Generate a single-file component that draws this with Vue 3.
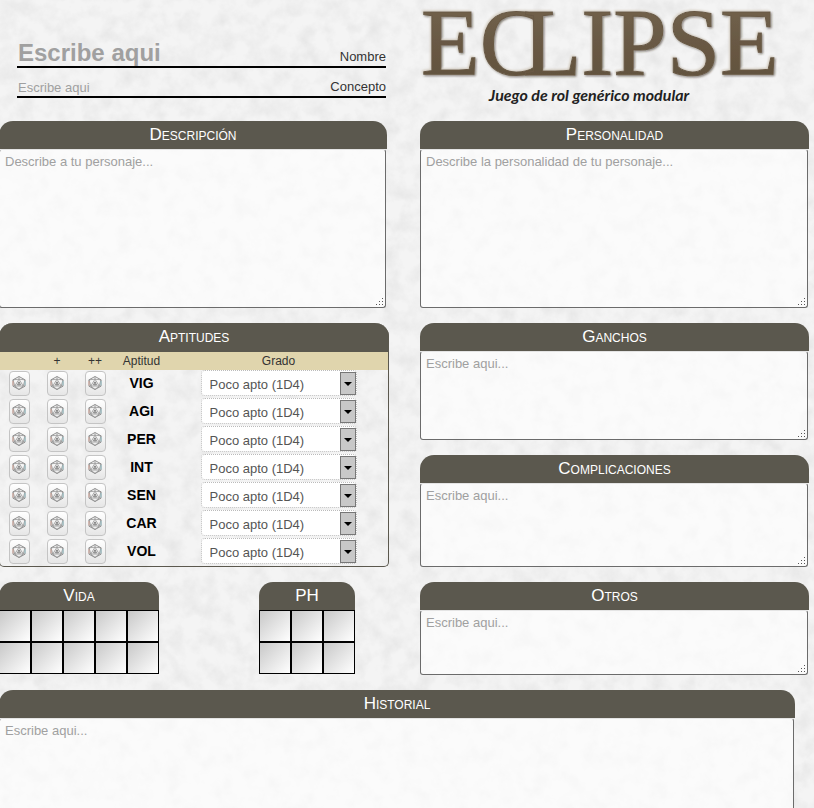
<script setup>
import { reactive } from 'vue'

const sheet = reactive({
  nombre: '', concepto: '', descripcion: '', personalidad: '',
  ganchos: '', complicaciones: '', otros: '', historial: ''
})
const grados = ['Poco apto (1D4)', 'Apto (1D6)', 'Muy apto (1D8)', 'Experto (1D10)']
const aptitudes = reactive(
  ['VIG', 'AGI', 'PER', 'INT', 'SEN', 'CAR', 'VOL'].map(name => ({ name, grado: grados[0] }))
)
const rolls = ['Tirar', 'Tirar +', 'Tirar ++']
const vida = reactive(Array(10).fill(false))
const ph = reactive(Array(6).fill(false))
const rightBoxes = [
  { key: 'personalidad', title: 'Personalidad', hint: 'Describe la personalidad de tu personaje...' },
  { key: 'ganchos', title: 'Ganchos', hint: 'Escribe aqui...' },
  { key: 'complicaciones', title: 'Complicaciones', hint: 'Escribe aqui...' },
  { key: 'otros', title: 'Otros', hint: 'Escribe aqui...' }
]
</script>

<template>
  <main class="sheet">
    <svg class="paper" aria-hidden="true">
      <filter id="grain" x="0" y="0" width="100%" height="100%">
        <feTurbulence type="fractalNoise" baseFrequency="0.06" numOctaves="6" seed="8" />
        <feColorMatrix values="0 0 0 0 0.45  0 0 0 0 0.45  0 0 0 0 0.45  0.3 0.2 0 0 -0.2" />
      </filter>
      <rect width="100%" height="100%" filter="url(#grain)" />
    </svg>

    <header class="top">
      <div class="identity">
        <div class="line">
          <input id="nombre" v-model="sheet.nombre" class="name" placeholder="Escribe aqui" />
          <label for="nombre">Nombre</label>
        </div>
        <div class="line">
          <input id="concepto" v-model="sheet.concepto" placeholder="Escribe aqui" />
          <label for="concepto">Concepto</label>
        </div>
      </div>
      <svg class="logo" viewBox="0 0 389 112" role="img" aria-label="Eclipse">
        <defs>
          <linearGradient id="bronze" x1="0" y1="0" x2="0" y2="1">
            <stop offset="0" stop-color="#75654e" />
            <stop offset="0.5" stop-color="#695944" />
            <stop offset="1" stop-color="#5f4f3b" />
          </linearGradient>
          <filter id="bevel" x="-5%" y="-10%" width="110%" height="125%">
            <feGaussianBlur in="SourceAlpha" stdDeviation="1" result="soft" />
            <feOffset in="soft" dx="1" dy="1" result="low" />
            <feFlood flood-color="#33271a" flood-opacity="0.7" />
            <feComposite in2="low" operator="in" result="shade" />
            <feOffset in="soft" dx="-1" dy="-1" result="high" />
            <feFlood flood-color="#d2cabd" />
            <feComposite in2="high" operator="in" result="light" />
            <feMerge>
              <feMergeNode in="shade" />
              <feMergeNode in="light" />
              <feMergeNode in="SourceGraphic" />
            </feMerge>
          </filter>
        </defs>
        <text class="wordmark" x="1" y="75" filter="url(#bevel)">EC<tspan dx="-21">LIPSE</tspan></text>
        <text class="motto" x="169" y="101">Juego de rol genérico modular</text>
      </svg>
    </header>

    <div class="columns">
      <div class="left">
        <section class="box descripcion">
          <h2><label for="descripcion">Descripción</label></h2>
          <div class="area">
            <textarea id="descripcion" v-model="sheet.descripcion" placeholder="Describe a tu personaje..."></textarea>
            <svg class="grip" viewBox="0 0 9 9"><path d="M0 7h1v1H0zM3 7h1v1H3zM6 7h1v1H6zM3 4h1v1H3zM6 4h1v1H6zM6 1h1v1H6z" /></svg>
          </div>
        </section>

        <section class="aptitudes">
          <h2>Aptitudes</h2>
          <table>
            <colgroup>
              <col class="c-roll" /><col class="c-roll" /><col class="c-roll" /><col class="c-name" /><col />
            </colgroup>
            <thead>
              <tr><th></th><th>+</th><th>++</th><th>Aptitud</th><th>Grado</th></tr>
            </thead>
            <tbody>
              <tr v-for="a in aptitudes" :key="a.name">
                <td v-for="r in rolls" :key="r">
                  <button type="button" class="die" :aria-label="r + ' ' + a.name">
                    <svg viewBox="0 0 14 16">
                      <path class="edge" d="M7 1.5 13 4.8V11.2L7 14.5 1 11.2V4.8Z" />
                      <path d="M7 4.2 11.2 11H2.8ZM7 1.5V4.2M1 4.8 7 4.2 13 4.8 11.2 11 13 11.2M1 4.8 2.8 11 1 11.2M2.8 11 7 14.5 11.2 11" />
                      <path class="mark" d="M5.6 9.8 7 6.8 8.4 9.8Z" />
                      <path class="warm" d="M1 6V10.4" />
                      <path class="cool" d="M13 6V10.4" />
                    </svg>
                  </button>
                </td>
                <td class="apt">{{ a.name }}</td>
                <td>
                  <span class="pick">
                    <select v-model="a.grado" :aria-label="'Grado de ' + a.name">
                      <option v-for="g in grados" :key="g">{{ g }}</option>
                    </select>
                    <span class="arrow"></span>
                  </span>
                </td>
              </tr>
            </tbody>
          </table>
        </section>

        <div class="counters">
          <section class="counter">
            <h2>Vida</h2>
            <div class="cells five">
              <button v-for="(v, i) in vida" :key="i" type="button" :class="{ on: v }" :aria-label="'Vida ' + (i + 1)" @click="vida[i] = !v"></button>
            </div>
          </section>
          <section class="counter">
            <h2>PH</h2>
            <div class="cells three">
              <button v-for="(v, i) in ph" :key="i" type="button" :class="{ on: v }" :aria-label="'PH ' + (i + 1)" @click="ph[i] = !v"></button>
            </div>
          </section>
        </div>
      </div>

      <div class="right">
        <section v-for="b in rightBoxes" :key="b.key" class="box" :class="b.key">
          <h2><label :for="b.key">{{ b.title }}</label></h2>
          <div class="area">
            <textarea :id="b.key" v-model="sheet[b.key]" :placeholder="b.hint"></textarea>
            <svg class="grip" viewBox="0 0 9 9"><path d="M0 7h1v1H0zM3 7h1v1H3zM6 7h1v1H6zM3 4h1v1H3zM6 4h1v1H6zM6 1h1v1H6z" /></svg>
          </div>
        </section>
      </div>
    </div>

    <section class="box historial">
      <h2><label for="historial">Historial</label></h2>
      <div class="area">
        <textarea id="historial" v-model="sheet.historial" placeholder="Escribe aqui..."></textarea>
      </div>
    </section>
  </main>
</template>

<style>
body {
  margin: 0;
  background: #f4f4f4;
}
</style>

<style scoped>
.sheet {
  position: relative;
  display: flex;
  flex-direction: column;
  box-sizing: border-box;
  min-height: 100vh;
  overflow: hidden;
  font-family: "Liberation Sans", Arial, sans-serif;
  font-size: 13px;
  color: #333;
}
.sheet > * {
  position: relative;
}
.sheet > .paper {
  position: absolute;
  inset: 0;
  width: 100%;
  height: 100%;
}
.top,
.columns {
  display: grid;
  grid-template-columns: 1fr 1fr;
  column-gap: 31px;
  padding-right: 5px;
}
.top {
  padding-bottom: 9px;
}
.identity {
  min-width: 0;
  padding: 38px 3px 0 17px;
}
.line {
  display: flex;
  align-items: flex-end;
  height: 28px;
  border-bottom: 2px solid #000;
}
.line input {
  flex: 1;
  min-width: 0;
  height: 18px;
  padding: 0 1px;
  border: 0;
  outline: 0;
  background: none;
  font: inherit;
}
.line input.name {
  height: 25px;
  padding-bottom: 1px;
  font-size: 24px;
  font-weight: bold;
}
.line label {
  padding-bottom: 1px;
  line-height: 16px;
}
::placeholder {
  color: #a0a0a0;
  opacity: 1;
}
.logo {
  display: block;
  width: 100%;
}
.wordmark {
  font-family: "Liberation Serif", "Times New Roman", serif;
  font-size: 96px;
  fill: url(#bronze);
  stroke: #695944;
  stroke-width: 1;
}
.motto {
  font-family: Lato, sans-serif;
  font-size: 16px;
  font-style: italic;
  font-weight: bold;
  text-anchor: middle;
  fill: #222;
}
.left,
.right {
  display: flex;
  flex-direction: column;
  gap: 15px;
  min-width: 0;
}
.left {
  margin-left: -1px;
}
h2 {
  margin: 0;
  height: 28px;
  border-radius: 14px 14px 0 0;
  background: #5b584e;
  color: #fff;
  font-size: 17px;
  font-weight: normal;
  font-variant: small-caps;
  line-height: 28px;
  text-align: center;
}
.descripcion {
  margin-right: 2px;
}
.area {
  position: relative;
  display: flex;
  margin-right: 1px;
}
textarea {
  box-sizing: border-box;
  width: 100%;
  height: 159px;
  padding: 4px 5px;
  border: 1px solid #6b6b6b;
  border-top-color: #e4e4e4;
  border-radius: 3px;
  outline: 0;
  background: rgba(255, 255, 255, 0.65);
  font: inherit;
  line-height: 16px;
  resize: none;
}
.ganchos textarea {
  height: 89px;
}
.complicaciones textarea {
  height: 84px;
}
.otros textarea {
  height: 65px;
}
.grip {
  position: absolute;
  right: 1px;
  bottom: 2px;
  width: 9px;
  height: 9px;
  fill: #555;
}
.aptitudes {
  border: 1px solid #5b584e;
  border-top: 0;
  border-radius: 14px 14px 5px 5px;
}
.aptitudes h2 {
  height: 29px;
  margin: 0 -1px;
}
table {
  width: 100%;
  table-layout: fixed;
  border-collapse: collapse;
}
.c-roll {
  width: 38px;
}
.c-name {
  width: 55px;
}
th {
  height: 18px;
  padding: 0;
  background: #e0d5ad;
  font-size: 12px;
  font-weight: normal;
  line-height: 18px;
}
td {
  box-sizing: border-box;
  height: 28px;
  padding: 0 0 2px;
  text-align: center;
  vertical-align: middle;
}
.apt {
  color: #000;
  font-size: 14px;
  font-weight: bold;
}
.die {
  display: flex;
  align-items: center;
  justify-content: center;
  width: 21px;
  height: 25px;
  margin: 0 auto;
  padding: 0;
  border: 1px solid #c4c4c4;
  border-radius: 4px;
  background: linear-gradient(#fff, #e6e6e6);
}
.die svg {
  flex: none;
  width: 14px;
  height: 16px;
  fill: none;
  stroke: #949494;
  stroke-width: 0.8;
}
.die .edge {
  stroke: #787878;
}
.die .mark {
  stroke: #606060;
}
.die .warm {
  stroke: #e0a595;
}
.die .cool {
  stroke: #8fc6cf;
}
.pick {
  position: relative;
  display: flex;
  box-sizing: border-box;
  width: 156px;
  height: 26px;
  margin: 0 auto;
  border: 1px dotted #bbb;
  border-radius: 4px;
  background: #fff;
}
select {
  width: 100%;
  padding: 2px 20px 0 8px;
  border: 0;
  outline: 0;
  appearance: none;
  background: none;
  color: #555;
  font: inherit;
}
.arrow {
  position: absolute;
  top: 1px;
  right: 0;
  display: flex;
  align-items: center;
  justify-content: center;
  box-sizing: border-box;
  width: 16px;
  height: 23px;
  border: 1px solid #777;
  background: #c8c8c8;
  pointer-events: none;
}
.arrow::after {
  content: "";
  border: 4px solid transparent;
  border-top-color: #000;
  border-bottom: 0;
}
.counters {
  display: flex;
  gap: 100px;
}
.cells {
  display: grid;
  grid-template-columns: repeat(3, 32px);
  grid-auto-rows: 32px;
}
.cells.five {
  grid-template-columns: repeat(5, 32px);
}
.cells button {
  padding: 0;
  border: 1px solid #000;
  border-radius: 0;
  background: linear-gradient(135deg, #c8c8c8, #fff);
}
.cells button.on {
  background: #5b584e;
}
.historial {
  display: flex;
  flex: 1;
  flex-direction: column;
  margin: 15px 19px 0 -1px;
}
.historial .area {
  flex: 1;
}
.historial textarea {
  height: auto;
  min-height: 90px;
  border-bottom: 0;
  border-radius: 3px 3px 0 0;
}
</style>
